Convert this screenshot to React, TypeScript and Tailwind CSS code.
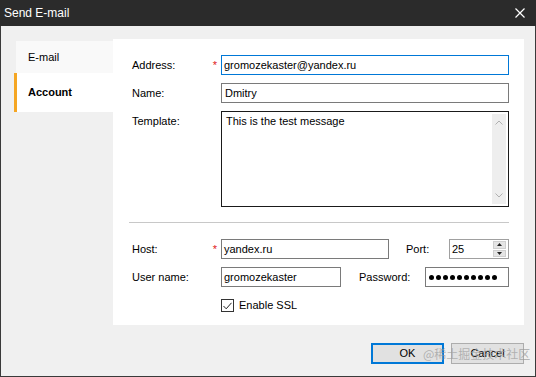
import React from "react";

function Field({ label, required, children }: { label: string; required?: boolean; children: React.ReactNode }) {
  return (
    <div className="flex items-center h-[20px]">
      <div className="w-[89px] flex justify-between pr-[4px]">
        <span>{label}</span>
        {required && <span className="text-[#e02020]">*</span>}
      </div>
      {children}
    </div>
  );
}

export default function App() {
  return (
    <div className="relative w-[536px] h-[377px] flex flex-col bg-[#f0f0f0] font-['Liberation_Sans',Arial,sans-serif] text-[11px] text-black overflow-hidden">
      {/* title bar */}
      <div className="h-[26px] shrink-0 bg-[#2b2b2b] text-white flex items-center justify-between pl-[4px] pr-[11px]">
        <span className="text-[12px]">Send E-mail</span>
        <svg width="10" height="10" viewBox="0 0 10 10" className="text-white">
          <path d="M0.5 0.5 L9.5 9.5 M9.5 0.5 L0.5 9.5" stroke="currentColor" strokeWidth="1.2" />
        </svg>
      </div>

      <div className="flex-1 flex flex-col border-x border-b border-[#3a3a3a] pl-[13px] pr-[11px] pt-[13px]">
        <div className="flex">
          {/* tabs */}
          <div className="w-[99px] flex flex-col pt-[2px]">
            <div className="h-[32px] ml-[2px] bg-[#f9f9f9] flex items-center pl-[12px]">E-mail</div>
            <div className="h-[39px] bg-white border-l-[3px] border-[#f5a623] flex items-center pl-[11px] font-bold">
              Account
            </div>
          </div>

          {/* panel */}
          <div className="w-[411px] h-[286px] bg-white pt-[16px] pl-[19px] pr-[15px] flex flex-col">
            <Field label="Address:" required>
              <div className="flex-1 h-[20px] border border-[#0078d7] flex items-center px-[2px]">gromozekaster@yandex.ru</div>
            </Field>
            <div className="mt-[8px]">
              <Field label="Name:">
                <div className="flex-1 h-[20px] border border-[#7a7a7a] flex items-center px-[3px]">Dmitry</div>
              </Field>
            </div>
            <div className="mt-[8px] flex h-[96px]">
              <div className="w-[89px] pt-[2px]">Template:</div>
              <div className="relative flex-1 border border-[#1a1a1a] pl-[4px] pt-[1px]">
                This is the test message
                <div className="absolute right-[2px] top-[2px] bottom-[2px] w-[14px] bg-[#eeeeee] flex flex-col justify-between items-center py-[6px]">
                  <svg width="8" height="5" viewBox="0 0 8 5">
                    <path d="M0.5 4.5 L4 1 L7.5 4.5" fill="none" stroke="#b0b0b0" strokeWidth="1" />
                  </svg>
                  <svg width="8" height="5" viewBox="0 0 8 5">
                    <path d="M0.5 0.5 L4 4 L7.5 0.5" fill="none" stroke="#b0b0b0" strokeWidth="1" />
                  </svg>
                </div>
              </div>
            </div>
            <div className="mt-[15px] -ml-[3px] h-px bg-[#c8c8c8]" />

            <div className="mt-[16px] flex items-center h-[20px]">
              <div className="w-[89px] flex justify-between pr-[4px]">
                <span>Host:</span>
                <span className="text-[#e02020]">*</span>
              </div>
              <div className="w-[168px] h-[20px] border border-[#7a7a7a] flex items-center px-[2px]">yandex.ru</div>
              <div className="w-[43px] ml-[17px]">Port:</div>
              <div className="w-[60px] h-[20px] border border-[#a0a0a0] flex items-center justify-between pl-[2px] pr-[2px]">
                <span>25</span>
                <div className="w-[13px] h-[16px] flex flex-col gap-px">
                  <div className="flex-1 bg-[#e5e5e5] border border-[#cfcfcf] flex items-center justify-center">
                    <svg width="5" height="3" viewBox="0 0 5 3"><path d="M0 3 L2.5 0 L5 3 Z" fill="#222" /></svg>
                  </div>
                  <div className="flex-1 bg-[#e5e5e5] border border-[#cfcfcf] flex items-center justify-center">
                    <svg width="5" height="3" viewBox="0 0 5 3"><path d="M0 0 L2.5 3 L5 0 Z" fill="#222" /></svg>
                  </div>
                </div>
              </div>
            </div>

            <div className="mt-[8px] flex items-center h-[20px]">
              <div className="w-[89px]">User name:</div>
              <div className="w-[120px] h-[20px] border border-[#7a7a7a] flex items-center px-[2px]">gromozekaster</div>
              <div className="w-[66px] ml-[18px]">Password:</div>
              <div className="w-[84px] h-[20px] border border-[#7a7a7a] flex items-center pl-[3px] gap-[2px]">
                {Array.from({ length: 10 }).map((_, i) => (
                  <span key={i} className="w-[5px] h-[5px] rounded-full bg-black" />
                ))}
              </div>
            </div>

            <div className="mt-[12px] flex items-center h-[13px] pl-[89px]">
              <div className="w-[13px] h-[13px] border border-[#333333] flex items-center justify-center">
                <svg width="9" height="8" viewBox="0 0 9 8">
                  <path d="M0.5 4 L3.2 6.8 L8.5 0.8" fill="none" stroke="#222" strokeWidth="1" />
                </svg>
              </div>
              <span className="ml-[5px]">Enable SSL</span>
            </div>
          </div>
        </div>

        {/* buttons */}
        <div className="mt-[18px] flex justify-end gap-[7px]">
          <button className="w-[73px] h-[21px] bg-[#e1e1e1] border-2 border-[#0078d7] text-[11px]">OK</button>
          <button className="w-[73px] h-[21px] bg-[#e1e1e1] border border-[#adadad] text-[11px]">Cancel</button>
        </div>
      </div>

      <span className="absolute left-[423px] top-[347px] whitespace-nowrap text-[12px] leading-[14px] text-[#9a9a9a]/70 font-['Noto_Sans_CJK_SC',sans-serif]">
        @稀土掘金技术社区
      </span>
    </div>
  );
}
